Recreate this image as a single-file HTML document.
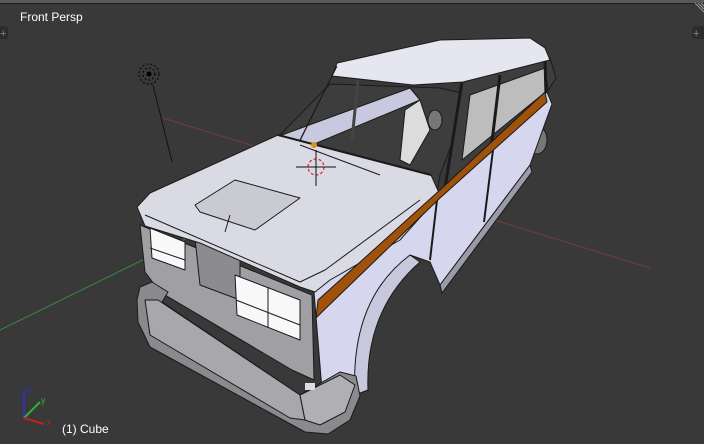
<!DOCTYPE html>
<html><head><meta charset="utf-8"><style>
html,body{margin:0;padding:0;width:704px;height:444px;overflow:hidden;background:#393939;font-family:"Liberation Sans",sans-serif}
.t{position:absolute;color:#fff;font-size:12px}
</style></head><body>
<div style="position:absolute;left:0;top:0;width:704px;height:3px;background:#5a5a5a;border-bottom:1px solid #1e1e1e"></div>
<div class="t" style="left:20px;top:10px">Front Persp</div>
<div class="t" style="left:62px;top:422px">(1) Cube</div>
<svg width="704" height="444" style="position:absolute;left:0;top:0">
<rect x="-4" y="26" width="12" height="13" rx="3" fill="#2c2c2c"/><text x="0" y="37" fill="#888" font-size="11" font-family="Liberation Sans">+</text>
<rect x="692" y="26" width="16" height="13" rx="3" fill="#2c2c2c"/><text x="693" y="37" fill="#888" font-size="11" font-family="Liberation Sans">+</text>
<path d="M695 3 L704 12 M698 3 L704 9 M701 3 L704 6" stroke="#999" stroke-width="1"/>
<line x1="163" y1="118" x2="650" y2="268" stroke="#7a3a3a" stroke-width="1"/>
<line x1="0" y1="330" x2="432" y2="118" stroke="#3a8a3a" stroke-width="1"/>
<circle cx="149" cy="74" r="10" fill="none" stroke="#000" stroke-dasharray="2,2"/>
<circle cx="149" cy="74" r="6" fill="none" stroke="#000" stroke-dasharray="2,2"/>
<circle cx="149" cy="74" r="2.5" fill="#000"/>
<line x1="153" y1="85" x2="172" y2="162" stroke="#111" stroke-width="1"/>
<g stroke="#1a1a1a" stroke-width="1" stroke-linejoin="round">
<!-- interior -->
<polygon points="280,135 330,84 440,88 470,95 440,175 430,232 300,185" fill="#3d3d3d"/>
<polygon points="282,135 410,88 420,100 300,150 285,175" fill="#c8c8de"/>
<polygon points="405,110 420,100 430,130 410,165 400,160" fill="#dcdcdc"/>
<!-- rear wheels -->
<ellipse cx="537" cy="140" rx="10" ry="14" fill="#777"/>
<ellipse cx="435" cy="120" rx="7" ry="10" fill="#777"/>
<!-- side windows area -->
<polygon points="445,188 462,82 550,58 556,78 547,92" fill="#3e3e3e"/>
<polygon points="470,95 545,68 548,90 462,160" fill="#bdbdbd"/>
<line x1="462" y1="82" x2="445" y2="188" stroke-width="3"/>
<line x1="500" y1="75" x2="490" y2="158" stroke-width="3"/>
<line x1="545" y1="60" x2="546" y2="95" stroke-width="3"/>
<!-- roof -->
<polygon points="337,63 440,40 530,38 545,48 550,60 463,82 413,85 332,76" fill="#e6e6f0"/>
<line x1="332" y1="76" x2="280" y2="180"/><line x1="337" y1="66" x2="283" y2="175"/>
<line x1="358" y1="80" x2="352" y2="140" stroke-width="3" stroke="#444"/>
<!-- side body -->
<polygon points="314,292 440,192 547,92 552,104 530,165 440,285 430,262 410,255 395,270 372,320 360,380 322,390" fill="#d6d6ee"/>
<polygon points="440,285 530,165 532,172 442,293" fill="#9a9aa8"/>
<line x1="493" y1="150" x2="484" y2="222" stroke-width="2"/>
<line x1="437" y1="200" x2="430" y2="260" stroke-width="2"/>
<path d="M355,395 Q350,300 410,255 L420,262 Q365,310 368,390 Z" fill="#c8c8dc"/>
<!-- front face -->
<polygon points="140,225 312,295 314,380 292,370 160,292 145,272" fill="#a0a0a4"/>
<polygon points="195,238 240,256 240,300 200,285" fill="#8c8c90"/>
<polygon points="235,275 300,300 300,340 237,315" fill="#f8f8f8"/>
<line x1="268" y1="287" x2="268" y2="328"/><line x1="236" y1="300" x2="300" y2="325"/>
<polygon points="150,228 185,242 185,270 152,258" fill="#f8f8f8"/>
<line x1="150" y1="248" x2="185" y2="260"/>
<!-- hood -->
<polygon points="137,207 150,193 278,135 431,175 440,195 400,240 330,280 315,292 300,287 200,243 145,226" fill="#dadae4"/>
<polyline points="145,215 300,282 325,270 420,200" fill="none"/>
<polygon points="195,205 235,180 300,198 255,230 200,212" fill="#cacad2"/>
<line x1="230" y1="215" x2="225" y2="232"/>
<line x1="278" y1="135" x2="431" y2="175" stroke-width="2"/>
<line x1="300" y1="145" x2="380" y2="175"/>
<!-- orange stripe -->
<polygon points="316,318 318,300 440,190 545,92 547,102 440,198 322,312" fill="#a0520a"/>
<!-- bumper -->
<path d="M140,287 L152,282 L168,292 L162,302 L300,395 L340,372 L356,376 L360,396 L350,420 L328,434 L305,432 L150,347 L138,322 L137,300 Z" fill="#8a8a8e"/>
<path d="M145,300 L158,300 L300,395 L305,420 L290,418 L150,335 Z" fill="#a8a8ac"/>
<path d="M300,395 L340,375 L355,385 L345,412 L320,425 L305,420 Z" fill="#b0b0b4"/>
<rect x="305" y="383" width="10" height="7" fill="#ddd" stroke="none"/>
</g>
<circle cx="316" cy="167" r="8" fill="none" stroke="#e03030" stroke-dasharray="3,2" stroke-width="1.3"/>
<line x1="296" y1="167" x2="336" y2="167" stroke="#111"/><line x1="316" y1="150" x2="316" y2="186" stroke="#111"/>
<circle cx="314" cy="145" r="3" fill="#e0901a"/>
<line x1="24" y1="418" x2="24" y2="390" stroke="#3030c0" stroke-width="2"/>
<line x1="24" y1="418" x2="40" y2="402" stroke="#30b030" stroke-width="2"/>
<line x1="24" y1="418" x2="44" y2="424" stroke="#c02020" stroke-width="2"/>
<text x="27" y="392" fill="#3030c0" font-size="9" font-family="Liberation Sans">z</text>
<text x="41" y="403" fill="#30b030" font-size="9" font-family="Liberation Sans">y</text>
<text x="47" y="425" fill="#c02020" font-size="9" font-family="Liberation Sans">x</text>
</svg>
</body></html>
